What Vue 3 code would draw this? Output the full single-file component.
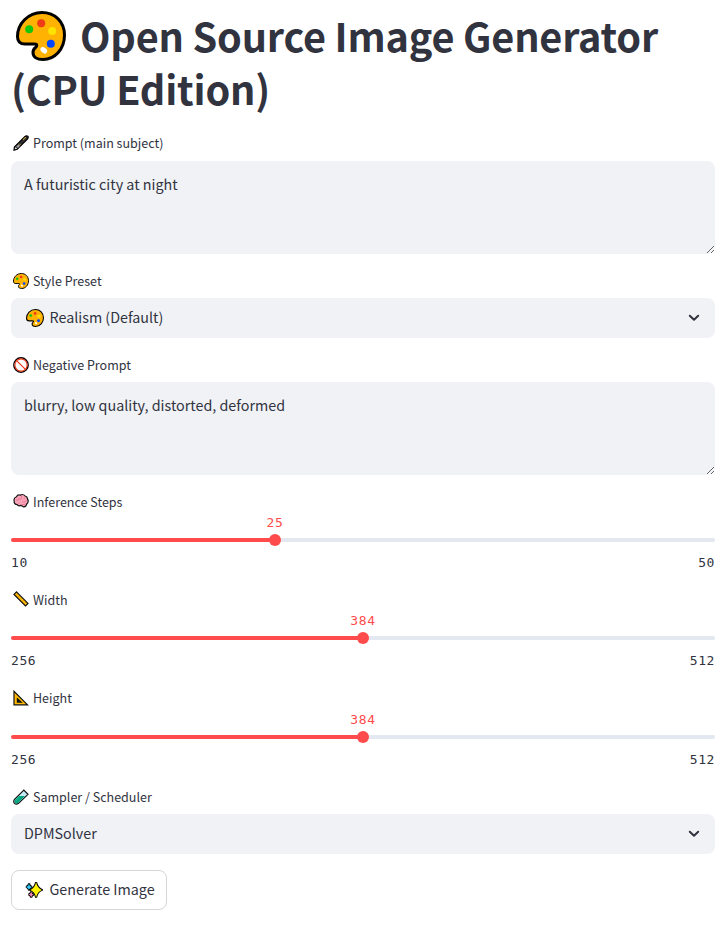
<script setup>
import { ref } from 'vue'

const prompt = ref('A futuristic city at night')
const negative = ref('blurry, low quality, distorted, deformed')
const sliders = [
  { label: 'Inference Steps', icon: 'brain', min: 10, max: 50, value: 25 },
  { label: 'Width', icon: 'ruler', min: 256, max: 512, value: 384 },
  { label: 'Height', icon: 'triangle', min: 256, max: 512, value: 384 },
]
const percent = (s) => ((s.value - s.min) / (s.max - s.min)) * 100 + '%'
</script>

<template>
  <svg class="sprite" aria-hidden="true">
    <symbol id="palette" viewBox="0 0 50 50">
      <path d="M26 1.5C12 1.5 1.5 13 1.5 25.5C1.5 31.5 5 33 9 33H18.5C21.5 33 21.3 35 19.5 36.5C17.5 38 17 39.5 17 41.5C17 46 21 48.5 27 48.5C39 48.5 48.5 38 48.5 24C48.5 11 39 1.5 26 1.5Z" fill="#ffb202" stroke="#000" stroke-width="3" />
      <circle cx="25.2" cy="12.3" r="4" fill="#f03a17" />
      <circle cx="13.2" cy="18.3" r="4" fill="#16c60c" />
      <circle cx="36.2" cy="20" r="4" fill="#fde300" />
      <circle cx="34.8" cy="32.7" r="4" fill="#0046ff" />
      <ellipse cx="27.8" cy="39.3" rx="3.8" ry="2.6" transform="rotate(42 27.8 39.3)" fill="#fff" />
    </symbol>
    <symbol id="brush" viewBox="0 0 16 16">
      <path d="M1 15.2L1.4 12L11.8 1.6Q13.4.2 14.8 1.2Q15.8 2.5 14.4 4.2L4.2 14.3Z" fill="#303030" stroke="#000" stroke-width="1.2" />
      <path d="M1.7 14.3L2.5 12L4.1 13.7Z" fill="#ddd" />
      <path d="M3.1 11.4L5 13.1L7.2 10.8L5.6 9.2Z" fill="#9b9b9b" />
      <path d="M10 4.8L12.8 2.2" stroke="#c19c35" stroke-width="1.1" />
      <path d="M6.3 8.6L7.7 10" stroke="#e0b735" stroke-width=".8" />
    </symbol>
    <symbol id="forbidden" viewBox="0 0 16 16">
      <circle cx="8" cy="8" r="7.2" fill="#fff" stroke="#000" stroke-width="1.4" />
      <circle cx="8" cy="8" r="6.1" fill="none" stroke="#f03a17" stroke-width="1.1" />
      <path d="M3.8 3.8L12.2 12.2" stroke="#f03a17" stroke-width="1.2" />
    </symbol>
    <symbol id="brain" viewBox="0 0 16 16">
      <path d="M1 6.7C1 4.9 2.3 4.1 3.5 3.7C4.3 2 6.2 1.8 7.3 2.2C9 1.1 11.2 2 12 3C13.7 3.3 14.5 4.7 14.5 6C15.8 7.6 15.1 9.9 13.9 10.7C13.5 12.6 12.1 14 10.5 13.8C9.4 13.5 8.9 12.7 7.9 12.4C6.3 13 4.7 12.6 4.2 11.6C2.1 11.5.8 9.8 1.2 8.4Z" fill="#f8a5bb" stroke="#151515" stroke-width="1.2" />
      <path d="M3.2 7.1H5.4Q6.7 6.2 5.8 4.9M8.5 3.1V5.3Q7.4 5.9 7.8 7.2M12.2 4.6L10.7 6.2M13.7 7.4L11.8 8.7Q10.4 9.2 9.1 8.5M5.4 10.8L6.9 9.4M8.8 11.8L12.7 11" fill="none" stroke="#e9748c" stroke-width="1" />
    </symbol>
    <symbol id="ruler" viewBox="0 0 16 16">
      <path d="M3.5.9L15 12.4L12.5 14.9L1 3.4Z" fill="#ffb900" stroke="#111" stroke-width="1.2" />
      <path d="M4.4 3L3.7 3.7M6.4 5L5.3 6.1M8.5 7.1L7.8 7.8M10.6 9.2L9.5 10.3M12.7 11.3L12 12" stroke="#a86a00" stroke-width=".6" />
    </symbol>
    <symbol id="triangle" viewBox="0 0 16 16">
      <path d="M1 1.3V14.8H14.5ZM4.4 8.8L8.2 12.1H4.4Z" fill="#ffb900" fill-rule="evenodd" stroke="#111" stroke-width="1.2" />
      <path d="M4.3 8.5L8 12.1H4.3Z" fill="#111" />
    </symbol>
    <symbol id="tube" viewBox="0 0 16 16">
      <path d="M9.8 2.1L10.8 1L15 5.3L13.9 6.4L5.3 14.6Q3 15.9 1.4 14.3Q0 12.4 1.5 10.4Z" fill="#c4eaf7" stroke="#111" stroke-width="1.2" />
      <path d="M6 6.9H11.9L5 13.9Q3.3 15 2 13.8Q.9 12.4 2.2 10.7Z" fill="#00a37e" />
      <path d="M3.1 11.7L6.8 8" stroke="#25c79b" stroke-width=".8" />
    </symbol>
    <symbol id="sparkles" viewBox="0 0 18 18">
      <path d="M4.1 2.4Q4.3 5.4 7.1 5.9Q4.3 6.5 4.1 9.3Q3.6 6.5 1 5.9Q3.6 5.4 4.1 2.4Z" fill="#35c9ff" stroke="#000" stroke-width="2" paint-order="stroke" />
      <path d="M6.2 10.5Q6.5 13 8.8 13.5Q6.5 14 6.2 16.6Q5.8 14 3.5 13.5Q5.8 13 6.2 10.5Z" fill="#ff8dbb" stroke="#000" stroke-width="2" paint-order="stroke" />
      <path d="M11.1 1.3Q12.2 7 16.9 8.9Q12.2 10.8 11.1 16.6Q9.9 10.8 5.4 8.9Q9.9 7 11.1 1.3Z" fill="#fff200" stroke="#000" stroke-width="2" paint-order="stroke" />
    </symbol>
  </svg>

  <main class="page">
    <h1><svg class="hero"><use href="#palette" /></svg><span>Open Source Image Generator</span><br>(CPU Edition)</h1>

    <label class="label first"><svg class="icon"><use href="#brush" /></svg>Prompt (main subject)</label>
    <textarea v-model="prompt" class="area" spellcheck="false"></textarea>

    <label class="label"><svg class="icon"><use href="#palette" /></svg>Style Preset</label>
    <div class="select">
      <svg class="icon large"><use href="#palette" /></svg><span>Realism (Default)</span>
      <svg class="chevron" viewBox="0 0 12 8"><path d="M1.8 1.7L6 5.7L10.2 1.7" /></svg>
    </div>

    <label class="label"><svg class="icon"><use href="#forbidden" /></svg>Negative Prompt</label>
    <textarea v-model="negative" class="area" spellcheck="false"></textarea>

    <section v-for="s in sliders" :key="s.label" class="slider">
      <label class="label"><svg class="icon"><use :href="'#' + s.icon" /></svg>{{ s.label }}</label>
      <div class="rail">
        <div class="fill" :style="{ width: percent(s) }"></div>
        <div class="thumb" :style="{ left: percent(s) }"><span>{{ s.value }}</span></div>
      </div>
      <div class="range"><span>{{ s.min }}</span><span>{{ s.max }}</span></div>
    </section>

    <label class="label"><svg class="icon"><use href="#tube" /></svg>Sampler / Scheduler</label>
    <div class="select">
      <span>DPMSolver</span>
      <svg class="chevron" viewBox="0 0 12 8"><path d="M1.8 1.7L6 5.7L10.2 1.7" /></svg>
    </div>
    <button class="generate"><svg class="icon large"><use href="#sparkles" /></svg><span>Generate Image</span></button>
  </main>
</template>

<style>
body { background: #fff; }
</style>

<style scoped>
.sprite { display: block; width: 0; height: 0; }
.page {
  box-sizing: border-box;
  display: flex;
  flex-direction: column;
  width: 726px;
  height: 943px;
  padding: 9px 11px 0;
  color: #31333f;
  font-family: "Noto Sans CJK SC", "Open Sans", sans-serif;
  font-size: 14.32px;
  overflow: hidden;
}
h1 {
  margin: 0;
  height: 108px;
  font-size: 39.65px;
  line-height: 52.8px;
  font-weight: 700;
  letter-spacing: -0.19px;
  white-space: nowrap;
}
.hero { width: 50px; height: 50px; margin: 0 14px 0 5px; vertical-align: -9px; }
.label {
  display: flex;
  align-items: center;
  flex: none;
  height: 17px;
  margin-top: 18px;
  margin-bottom: 9px;
  font-size: 12.53px;
  line-height: 17px;
}
.label.first { margin-top: 17px; margin-bottom: 10px; }
.icon { flex: none; width: 16px; height: 16px; margin: 0 4.5px 0 1.5px; }
.icon.large { width: 18px; height: 18px; margin: 0 6px 0 1.5px; }
.area {
  box-sizing: border-box;
  flex: none;
  width: 704px;
  height: 93px;
  margin: 0;
  padding: 12px 13px;
  border: 0;
  border-radius: 8px;
  outline: 0;
  background: #f0f2f6;
  color: inherit;
  font: inherit;
  line-height: 22.4px;
  resize: vertical;
}
.select {
  box-sizing: border-box;
  flex: none;
  display: flex;
  align-items: center;
  height: 40px;
  padding: 0 15px 0 13px;
  border-radius: 8px;
  background: #f0f2f6;
  line-height: 22px;
}
.select span { margin-top: -2px; }
.chevron { width: 12px; height: 8px; margin-left: auto; fill: none; stroke: #31333f; stroke-width: 2; stroke-linecap: round; stroke-linejoin: round; }
.slider { flex: none; height: 98.4px; }
.slider .label { margin-top: 17.6px; margin-bottom: 28.4px; }
.rail { position: relative; height: 4px; border-radius: 4px; background: #e4e8f0; }
.fill { height: 4px; border-radius: 4px 0 0 4px; background: #ff4b4b; }
.thumb { position: absolute; top: -4px; width: 12px; height: 12px; margin-left: -6px; border-radius: 50%; background: #ff4b4b; }
.thumb span { position: absolute; bottom: 15px; left: 50%; transform: translateX(-50%); color: #ff4b4b; }
.range, .thumb span { font-family: "DejaVu Sans Mono", monospace; font-size: 13px; letter-spacing: 0.6px; line-height: 17px; }
.range { display: flex; justify-content: space-between; margin-top: 12px; }
.generate {
  box-sizing: border-box;
  flex: none;
  display: flex;
  align-items: center;
  width: 156px;
  height: 40px;
  margin: 16px 0 0;
  padding: 0 12px;
  border: 1px solid #d6d6d9;
  border-radius: 8px;
  background: #fff;
  color: inherit;
  font: inherit;
  line-height: 22px;
  white-space: nowrap;
}
.generate .icon.large { margin: 0 6.5px 0 1px; }
.generate span { margin-top: -3px; }
</style>
